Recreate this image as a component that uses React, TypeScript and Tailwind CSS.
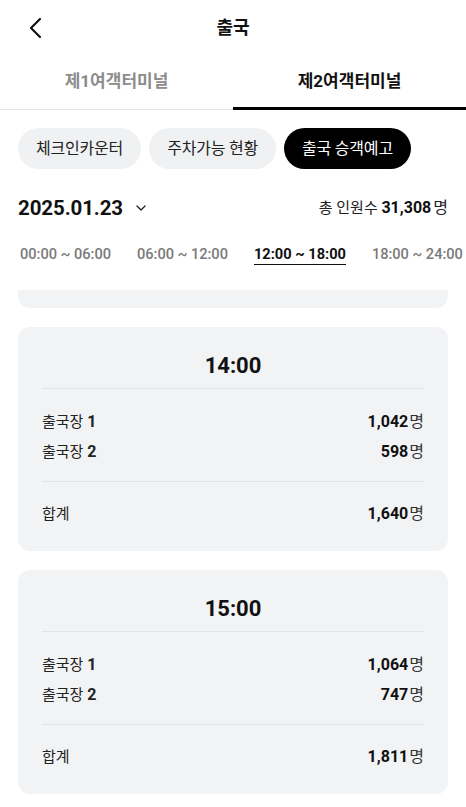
import React, { useState } from 'react';

const font = { fontFamily: "Roboto, 'Noto Sans CJK KR', sans-serif" };

const slots = [
  {
    time: '14:00',
    rows: [
      { label: '출국장', no: '1', count: '1,042' },
      { label: '출국장', no: '2', count: '598' },
    ],
    total: '1,640',
  },
  {
    time: '15:00',
    rows: [
      { label: '출국장', no: '1', count: '1,064' },
      { label: '출국장', no: '2', count: '747' },
    ],
    total: '1,811',
  },
];

const ranges = ['00:00 ~ 06:00', '06:00 ~ 12:00', '12:00 ~ 18:00', '18:00 ~ 24:00'];

const SlotCard = ({ slot }) => (
  <div className="bg-[#f2f3f5] rounded-[12px] px-6 pt-[25px] pb-[22px] shrink-0">
    <div className="text-center text-[22px] leading-[28px] font-bold text-[#111] pb-[8px] border-b border-[#e2e3e6]">
      {slot.time}
    </div>
    <div className="pt-[18px] pb-[14px] border-b border-[#e2e3e6]">
      {slot.rows.map((r, i) => (
        <div key={i} className="flex items-center justify-between h-[30px]">
          <span className="text-[15px] text-[#222]">
            {r.label} <span className="font-bold text-[16px]">{r.no}</span>
          </span>
          <span className="text-[16px] text-[#111]">
            <span className="font-bold">{r.count}</span>
            <span className="ml-[1px] text-[#333]">명</span>
          </span>
        </div>
      ))}
    </div>
    <div className="flex items-center justify-between h-[30px] mt-[17px]">
      <span className="text-[15px] text-[#222]">합계</span>
      <span className="text-[16px] text-[#111]">
        <span className="font-bold">{slot.total}</span>
        <span className="ml-[1px] text-[#333]">명</span>
      </span>
    </div>
  </div>
);

const App = () => {
  const [terminal, setTerminal] = useState(1);
  const [chip, setChip] = useState(2);
  const [range, setRange] = useState(2);
  const chips = ['체크인카운터', '주차가능 현황', '출국 승객예고'];

  return (
    <div className="w-[466px] h-[807px] bg-white flex flex-col overflow-hidden text-[#111]" style={font}>
      {/* header */}
      <div className="relative h-[55px] flex items-center justify-center shrink-0">
        <button className="absolute left-[22px] top-[12px] p-1">
          <svg width="20" height="24" viewBox="0 0 20 24" fill="none">
            <path d="M14 3 L5 12 L14 21" stroke="#111" strokeWidth="2.2" strokeLinecap="round" strokeLinejoin="round" />
          </svg>
        </button>
        <h1 className="text-[18px] font-bold">출국</h1>
      </div>

      {/* terminal tabs */}
      <div className="flex h-[55px] border-b border-[#e4e4e4] shrink-0">
        {['제1여객터미널', '제2여객터미널'].map((t, i) => (
          <button
            key={t}
            onClick={() => setTerminal(i)}
            className={`flex-1 text-[17px] font-bold relative ${terminal === i ? 'text-[#111]' : 'text-[#8c8c8c]'}`}
          >
            {t}
            {terminal === i && <span className="absolute left-0 right-0 bottom-[-1px] h-[3px] bg-black" />}
          </button>
        ))}
      </div>

      {/* chips */}
      <div className="flex gap-2 px-[18px] pt-[18px] shrink-0">
        {chips.map((c, i) => (
          <button
            key={c}
            onClick={() => setChip(i)}
            className={`h-[41px] px-[18px] rounded-full text-[16px] tracking-[-0.2px] ${chip === i ? 'bg-black text-white' : 'bg-[#f0f1f3] text-[#222]'}`}
          >
            {c}
          </button>
        ))}
      </div>

      {/* date row */}
      <div className="flex items-center justify-between px-[18px] mt-[25px] shrink-0">
        <div className="flex items-center">
          <span className="text-[20.5px] font-bold leading-[28px] tracking-[-0.1px]">2025.01.23</span>
          <svg className="ml-[13px]" width="10" height="6" viewBox="0 0 10 6" fill="none">
            <path d="M1 1 L5 5 L9 1" stroke="#222" strokeWidth="1.3" strokeLinecap="round" strokeLinejoin="round" />
          </svg>
        </div>
        <div className="text-[15px] text-[#222]">
          총 인원수 <span className="font-bold text-[16px] text-[#111]">31,308</span>
          <span className="ml-[2px] text-[16px]">명</span>
        </div>
      </div>

      {/* time ranges */}
      <div className="flex gap-[26px] pl-[20px] mt-[23px] whitespace-nowrap shrink-0">
        {ranges.map((r, i) => (
          <button
            key={r}
            onClick={() => setRange(i)}
            className={`text-[14.6px] leading-[18px] pb-[1px] border-b shrink-0 ${range === i ? 'font-bold text-[#111] border-[#111]' : 'font-medium text-[#7a7a7a] border-transparent'}`}
          >
            {r}
          </button>
        ))}
      </div>

      {/* list */}
      <div className="flex-1 overflow-hidden px-[18px] mt-[25px] flex flex-col gap-[19px]">
        <div className="h-[18px] shrink-0 bg-[#f2f3f5] rounded-b-[12px]" />
        {slots.map(s => (
          <SlotCard key={s.time} slot={s} />
        ))}
      </div>
    </div>
  );
};

export default App;
